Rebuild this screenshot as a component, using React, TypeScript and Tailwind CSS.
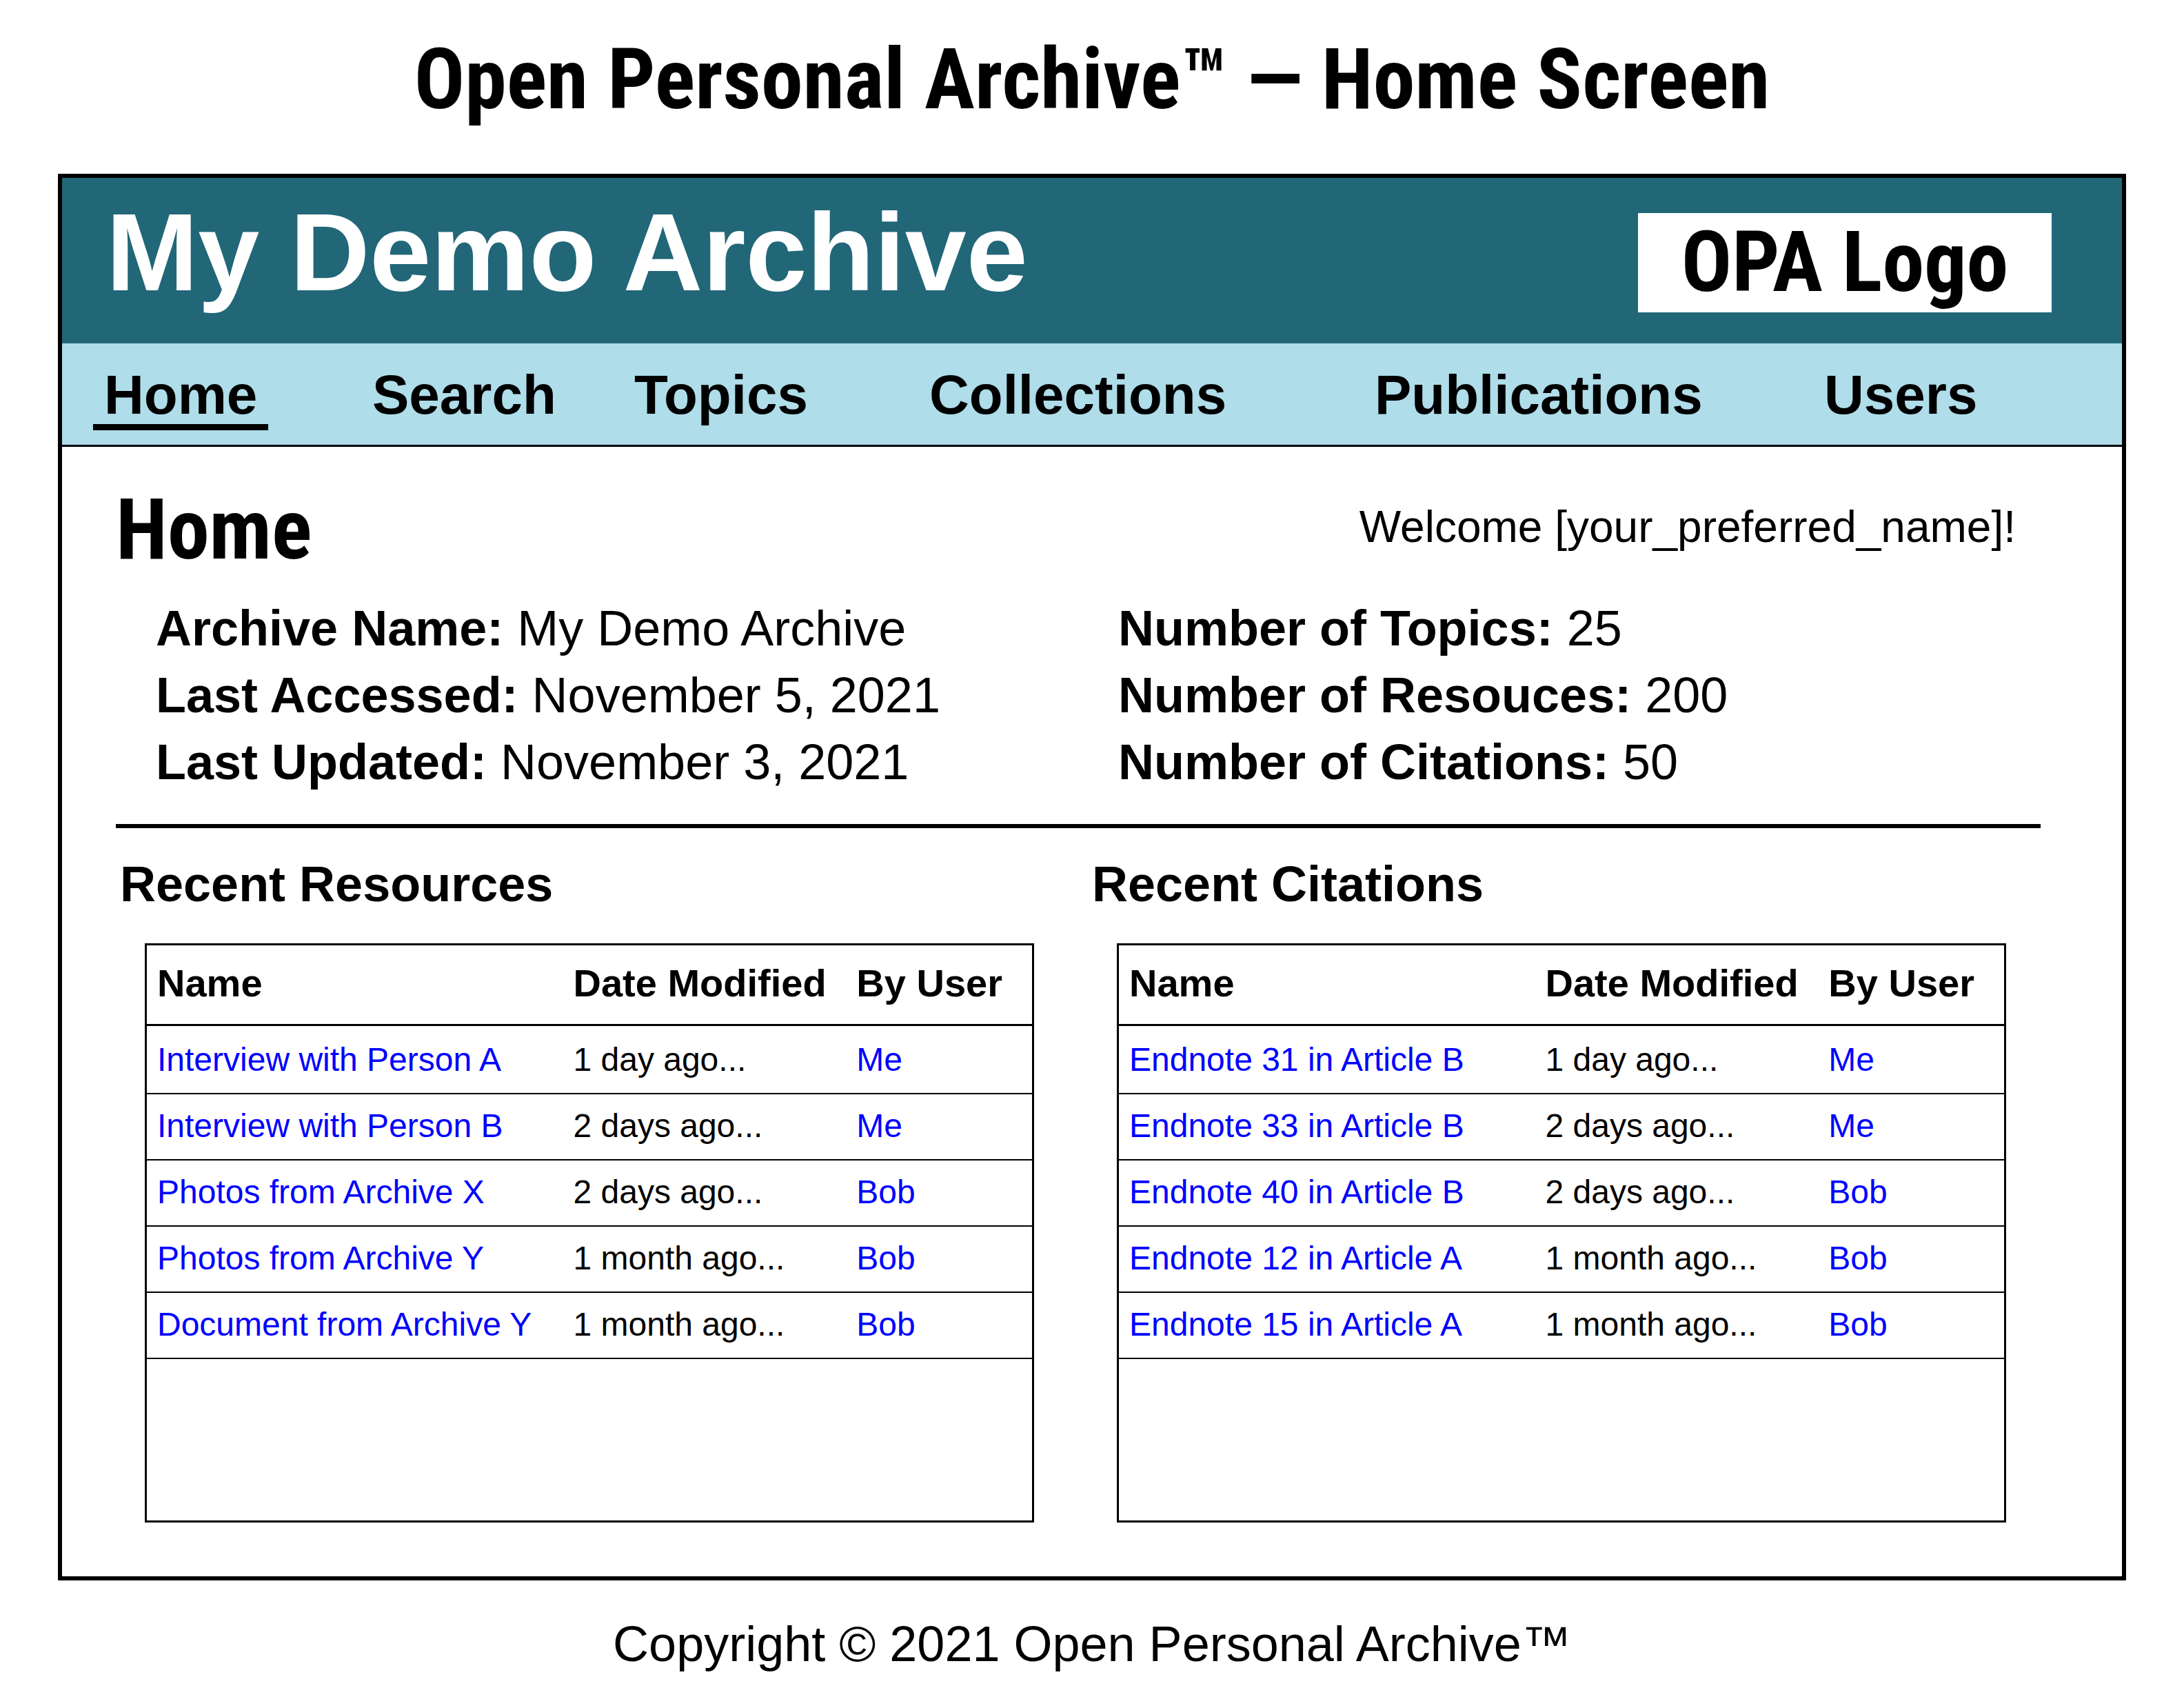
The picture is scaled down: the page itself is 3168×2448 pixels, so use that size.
type Entry = { name: string; modified: string; user: string };

const navItems = ['Home', 'Search', 'Topics', 'Collections', 'Publications', 'Users'];

const archiveFacts = [
  { label: 'Archive Name:', value: 'My Demo Archive' },
  { label: 'Last Accessed:', value: 'November 5, 2021' },
  { label: 'Last Updated:', value: 'November 3, 2021' },
];

const countFacts = [
  { label: 'Number of Topics:', value: '25' },
  { label: 'Number of Resouces:', value: '200' },
  { label: 'Number of Citations:', value: '50' },
];

const resources: Entry[] = [
  { name: 'Interview with Person A', modified: '1 day ago...', user: 'Me' },
  { name: 'Interview with Person B', modified: '2 days ago...', user: 'Me' },
  { name: 'Photos from Archive X', modified: '2 days ago...', user: 'Bob' },
  { name: 'Photos from Archive Y', modified: '1 month ago...', user: 'Bob' },
  { name: 'Document from Archive Y', modified: '1 month ago...', user: 'Bob' },
];

const citations: Entry[] = [
  { name: 'Endnote 31 in Article B', modified: '1 day ago...', user: 'Me' },
  { name: 'Endnote 33 in Article B', modified: '2 days ago...', user: 'Me' },
  { name: 'Endnote 40 in Article B', modified: '2 days ago...', user: 'Bob' },
  { name: 'Endnote 12 in Article A', modified: '1 month ago...', user: 'Bob' },
  { name: 'Endnote 15 in Article A', modified: '1 month ago...', user: 'Bob' },
];

function FactList({ facts }: { facts: { label: string; value: string }[] }) {
  return (
    <dl className="pl-[58px] text-[72px] leading-[97px]">
      {facts.map((fact) => (
        <div key={fact.label} className="whitespace-nowrap">
          <dt className="inline font-bold">{fact.label}</dt>{' '}
          <dd className="inline">{fact.value}</dd>
        </div>
      ))}
    </dl>
  );
}

function RecentTable({ id, title, entries }: { id: string; title: string; entries: Entry[] }) {
  return (
    <section>
      <h3 id={id} className="pl-0.5 text-[72px] leading-[72px] font-bold">
        {title}
      </h3>
      <div className="mt-[50px] ml-[38px] border-[3px] border-black pb-[234px]">
        <table
          aria-labelledby={id}
          className="w-full table-fixed border-separate border-spacing-0 text-left whitespace-nowrap"
        >
          <colgroup>
            <col className="w-[47%]" />
            <col className="w-[32%]" />
            <col className="w-[21%]" />
          </colgroup>
          <thead className="text-[56px] leading-[110px]">
            <tr>
              <th className="border-b-[3px] border-black pb-1 pl-[15px] font-bold">Name</th>
              <th className="border-b-[3px] border-black pb-1 pl-[15px] font-bold">Date Modified</th>
              <th className="border-b-[3px] border-black pb-1 pl-[15px] font-bold">By User</th>
            </tr>
          </thead>
          <tbody className="text-[48px] leading-[92px]">
            {entries.map((entry) => (
              <tr key={entry.name} className="group">
                <td className="border-b-2 border-black pb-0.5 pl-[15px] group-first:pt-[3px]">
                  <a href="#" className="text-[#0000ff]">{entry.name}</a>
                </td>
                <td className="border-b-2 border-black pb-0.5 pl-[15px] group-first:pt-[3px]">
                  {entry.modified}
                </td>
                <td className="border-b-2 border-black pb-0.5 pl-[15px] group-first:pt-[3px]">
                  <a href="#" className="text-[#0000ff]">{entry.user}</a>
                </td>
              </tr>
            ))}
          </tbody>
        </table>
      </div>
    </section>
  );
}

export default function App() {
  return (
    <div className="bg-white px-[84px] font-['Liberation_Sans',Arial,sans-serif] text-black">
      <h1 className="pb-5 text-center font-['Liberation_Sans_Narrow','Arial_Narrow','Roboto_Condensed','Liberation_Sans',sans-serif] text-[122px] leading-[232px] font-bold whitespace-nowrap">
        Open Personal Archive™ — Home Screen
      </h1>

      <div className="border-[6px] border-black">
        <header className="flex items-start justify-between bg-[#216778] pr-[102px] pb-[45px] pl-16">
          <div className="pt-7 text-[160px] leading-[160px] font-bold whitespace-nowrap text-white">
            My Demo Archive
          </div>
          <div className="mt-[51px] w-[600px] bg-white text-center font-['Liberation_Sans_Narrow','Arial_Narrow','Roboto_Condensed','Liberation_Sans',sans-serif] text-[122px] leading-[144px] font-bold whitespace-nowrap">
            OPA Logo
          </div>
        </header>

        <nav
          aria-label="Main"
          className="grid grid-cols-[389fr_380fr_428fr_646fr_652fr_448fr] justify-items-start border-b-[3px] border-black bg-[#afdde9] pt-[35px] pb-[21px] pl-[45px] text-[80px] leading-[80px] font-bold"
        >
          {navItems.map((item, index) => (
            <a
              key={item}
              href="#"
              aria-current={index === 0 ? 'page' : undefined}
              className="border-b-[9px] border-transparent px-4 pb-0.5 aria-[current=page]:border-black"
            >
              {item}
            </a>
          ))}
        </nav>

        <main className="pt-[61px] pr-[118px] pb-[78px] pl-[78px]">
          <div className="flex items-start justify-between pr-9">
            <h2 className="font-['Liberation_Sans_Narrow','Arial_Narrow','Roboto_Condensed','Liberation_Sans',sans-serif] text-[122px] leading-[120px] font-bold">
              Home
            </h2>
            <p className="text-[64px] leading-[110px]">Welcome [your_preferred_name]!</p>
          </div>

          <div className="mt-[34px] grid grid-cols-2">
            <FactList facts={archiveFacts} />
            <FactList facts={countFacts} />
          </div>

          <hr className="mt-[41px] border-t-[6px] border-black" />

          <div className="mt-[45px] grid grid-cols-2 gap-x-[82px] pr-[50px] pl-1">
            <RecentTable id="recent-resources" title="Recent Resources" entries={resources} />
            <RecentTable id="recent-citations" title="Recent Citations" entries={citations} />
          </div>
        </main>
      </div>

      <footer className="pt-8 pb-1 text-center text-[72px] leading-[120px]">
        Copyright © 2021 Open Personal Archive™
      </footer>
    </div>
  );
}
